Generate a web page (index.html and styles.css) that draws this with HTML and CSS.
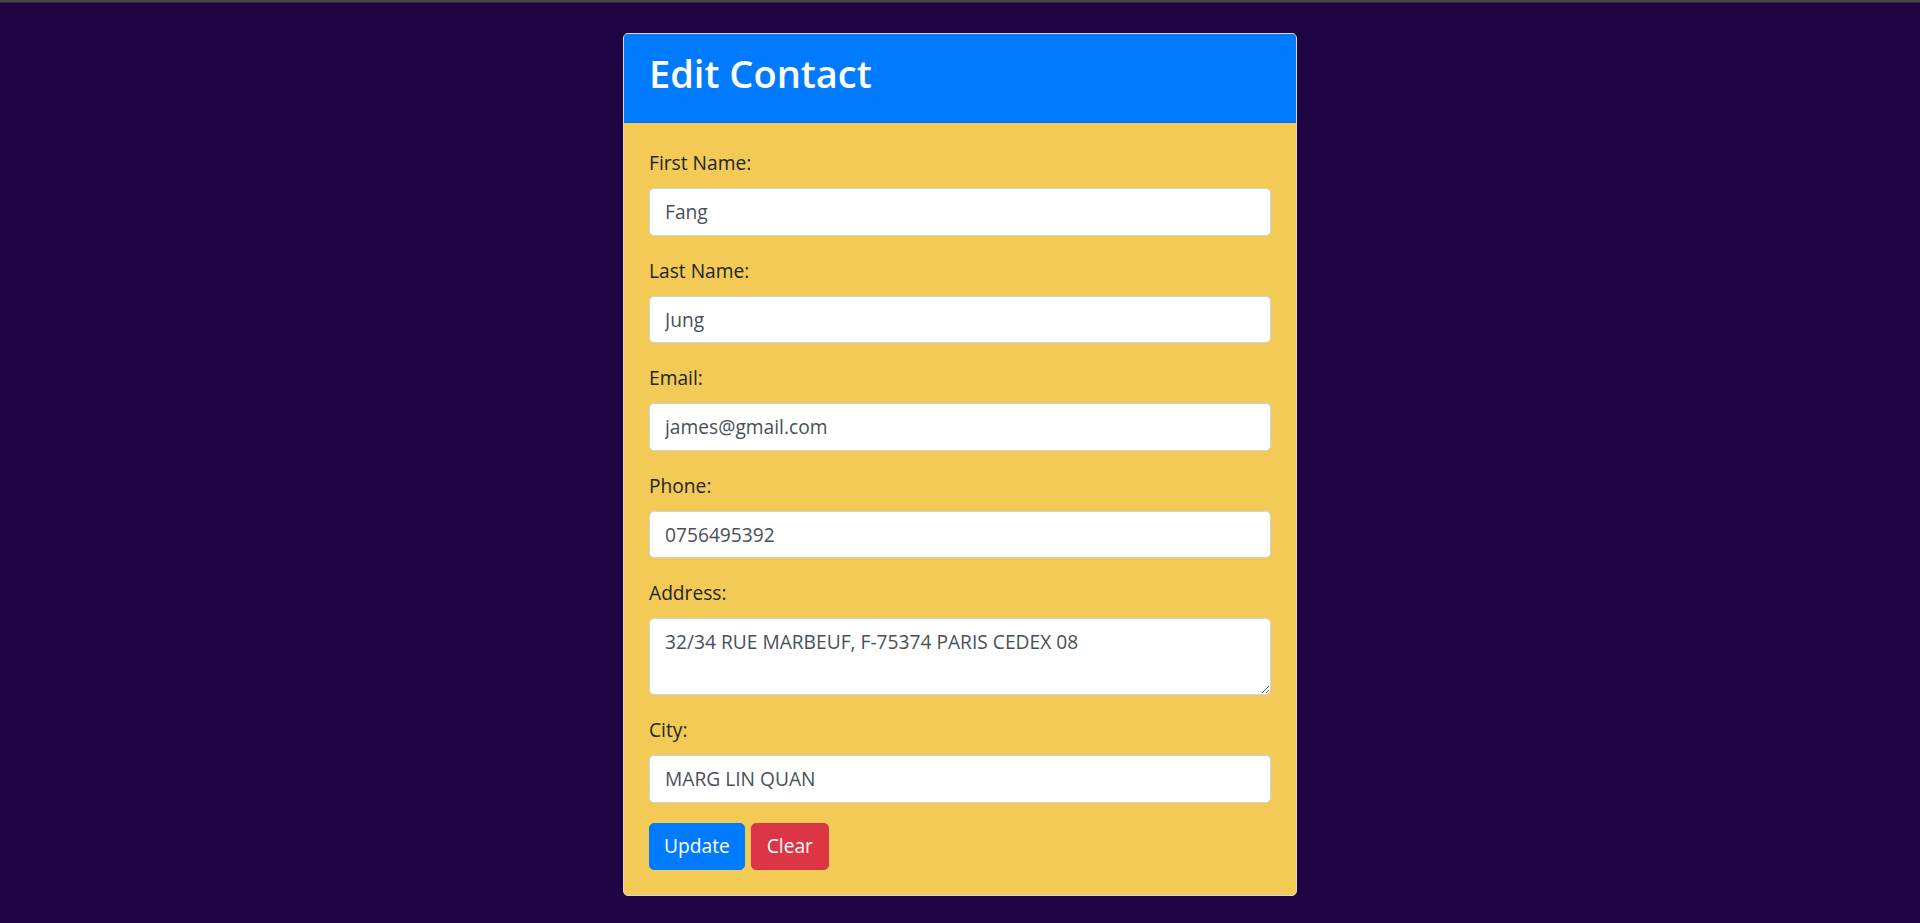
FILE: index.html
```html
<!DOCTYPE html>
<html lang="en">
<head>
<meta charset="utf-8">
<title>Edit Contact</title>
<link rel="stylesheet" href="styles.css">
</head>
<body>
<div class="topbar"></div>
<main class="page">
  <section class="card">
    <header class="card-header">
      <h2 class="card-title">Edit Contact</h2>
    </header>
    <form class="card-body">
      <div class="form-group">
        <label class="label" for="fn">First Name:</label>
        <input class="control" id="fn" type="text" value="Fang">
      </div>
      <div class="form-group">
        <label class="label" for="ln">Last Name:</label>
        <input class="control" id="ln" type="text" value="Jung">
      </div>
      <div class="form-group">
        <label class="label" for="em">Email:</label>
        <input class="control" id="em" type="text" value="james@gmail.com">
      </div>
      <div class="form-group">
        <label class="label" for="ph">Phone:</label>
        <input class="control" id="ph" type="text" value="0756495392">
      </div>
      <div class="form-group">
        <label class="label" for="ad">Address:</label>
        <textarea class="control area" id="ad" rows="2">32/34 RUE MARBEUF, F-75374 PARIS CEDEX 08</textarea>
      </div>
      <div class="form-group">
        <label class="label" for="ci">City:</label>
        <input class="control" id="ci" type="text" value="MARG LIN QUAN">
      </div>
      <div class="actions">
        <button type="button" class="btn btn-primary">Update</button>
        <button type="button" class="btn btn-danger">Clear</button>
      </div>
    </form>
  </section>
</main>
</body>
</html>
```
FILE: styles.css
```css
* { box-sizing: border-box; }
html, body {
  margin: 0;
  padding: 0;
}
body {
  background: #1f0342;
  font-family: "Open Sans", "Noto Sans", sans-serif;
  font-size: 19.2px;
  line-height: 30px;
  color: #212529;
  min-height: 923px;
}
.topbar {
  height: 3px;
  background: #474747;
  border-bottom: 1px solid #2e2e2e;
}
.page {
  padding-top: 30px;
}
.card {
  width: 674px;
  margin: 0 auto;
  border: 1px solid #dcdad6;
  border-radius: 5px;
  overflow: hidden;
  background: #f2ca55;
}
.card-header {
  background: #007bff;
  padding: 15px 25px 15px;
  border-bottom: 1px solid #0a6fd9;
}
.card-title {
  margin: 0 0 10px;
  color: #fff;
  font-size: 38px;
  font-weight: 600;
  line-height: 48px;
}
.card-body {
  display: block;
  padding: 25px;
}
.form-group {
  margin-bottom: 20px;
}
.label {
  display: inline-block;
  margin-bottom: 10px;
  color: #212529;
}
.control {
  display: block;
  width: 100%;
  height: 47.5px;
  padding: 7.5px 15px;
  font-family: inherit;
  font-size: 19.2px;
  line-height: 30px;
  color: #495057;
  background: #fff;
  border: 1px solid #ced4da;
  border-radius: 5px;
  margin: 0;
}
.area {
  height: auto;
  resize: vertical;
  overflow: auto;
}
.actions {
  display: flex;
  gap: 6px;
}
.btn {
  font-family: inherit;
  font-size: 19.2px;
  line-height: 30px;
  padding: 7.5px 14px;
  border-radius: 5px;
  border: 1px solid transparent;
  color: #fff;
  cursor: pointer;
}
.btn-danger {
  padding: 7.5px 15px;
}
.btn-primary {
  background: #007bff;
  border-color: #007bff;
}
.btn-danger {
  background: #dc3545;
  border-color: #dc3545;
}
```
